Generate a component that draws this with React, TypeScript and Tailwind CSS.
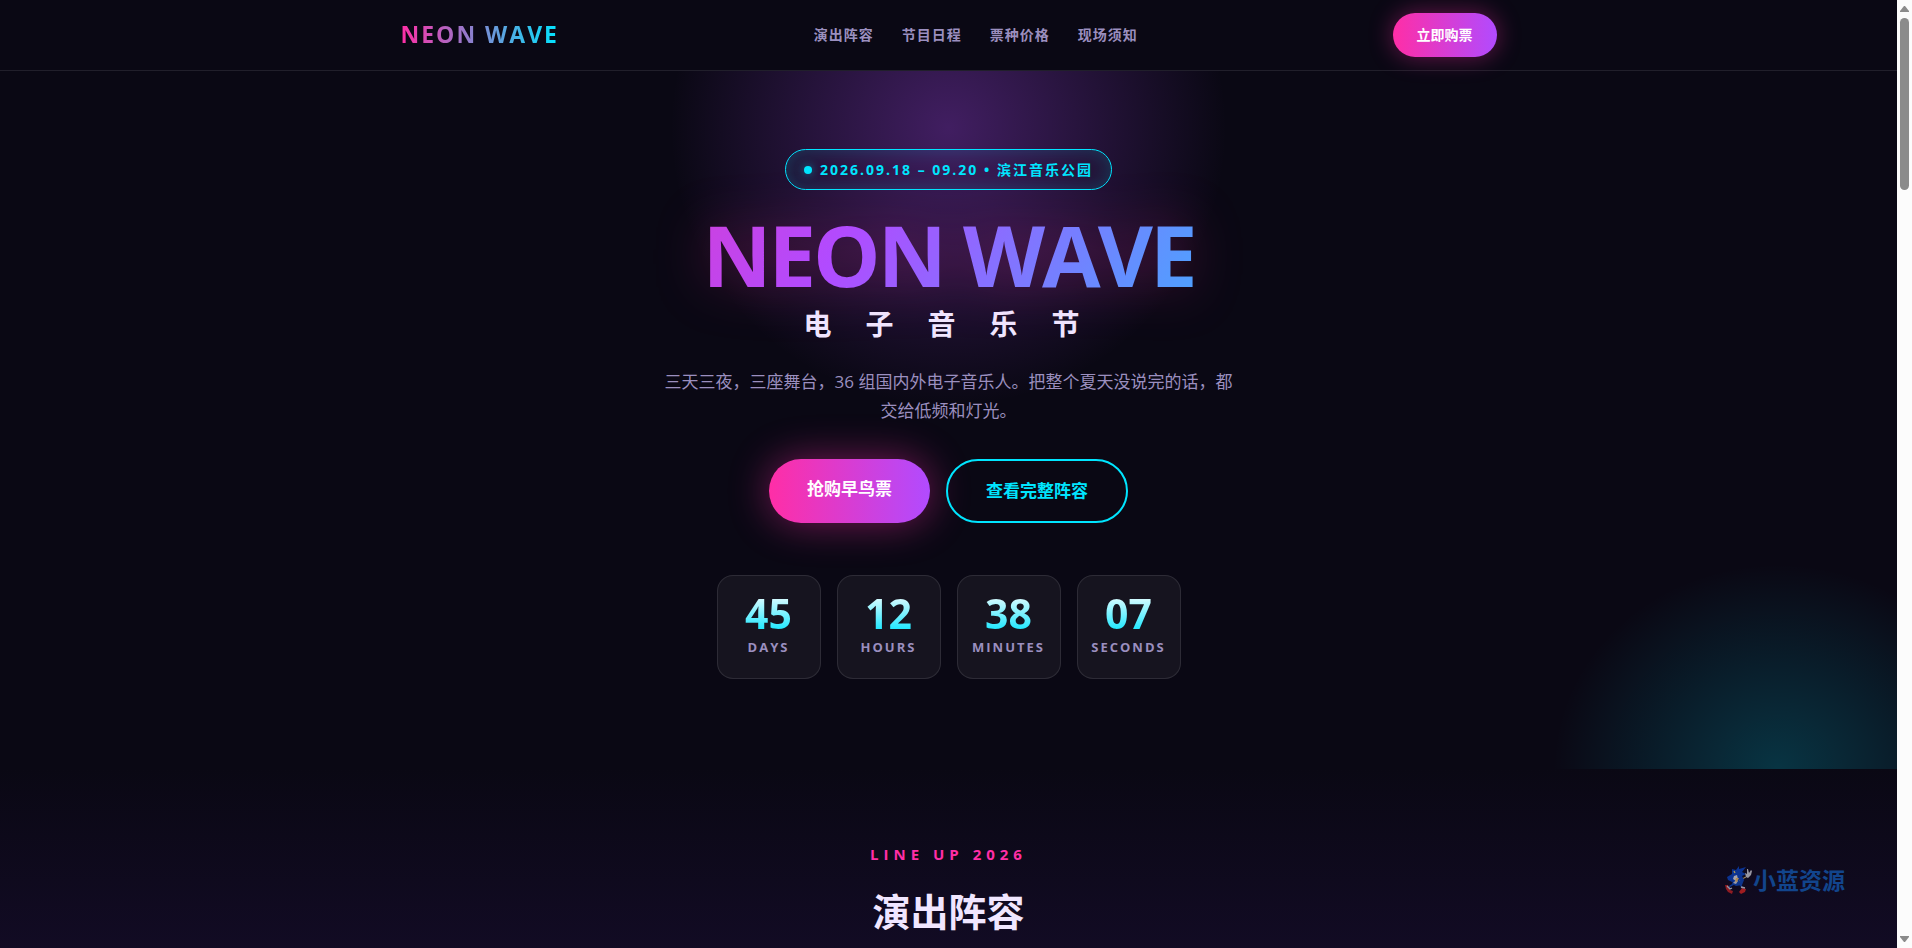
const navLinks = [
  { label: "演出阵容", href: "#lineup" },
  { label: "节目日程", href: "#schedule" },
  { label: "票种价格", href: "#tickets" },
  { label: "现场须知", href: "#info" },
];

const countdown = [
  { value: "45", unit: "DAYS" },
  { value: "12", unit: "HOURS" },
  { value: "38", unit: "MINUTES" },
  { value: "07", unit: "SECONDS" },
];

function Header() {
  return (
    <header className="relative z-10 border-b border-[#211f2b] bg-[#0a0814]">
      <div className="mx-auto flex h-[70px] max-w-[1144px] items-center justify-between px-6">
        <a
          href="#top"
          className="bg-[linear-gradient(90deg,#ff2ea6,#00e5ff)] bg-clip-text pb-0.5 text-[23px] leading-[34px] font-bold tracking-[2px] text-transparent"
        >
          NEON WAVE
        </a>
        <nav className="flex gap-7">
          {navLinks.map((link) => (
            <a key={link.href} href={link.href} className="text-sm font-bold tracking-[1px] text-[#9b8fbf]">
              {link.label}
            </a>
          ))}
        </nav>
        <a
          href="#tickets"
          className="rounded-full bg-[linear-gradient(90deg,#ff2ea6,#b14bff)] px-6 py-[11px] text-sm leading-[22px] font-bold text-white shadow-[0_0_24px_rgba(255,46,166,0.4)]"
        >
          立即购票
        </a>
      </div>
    </header>
  );
}

function Hero() {
  return (
    <section
      id="top"
      className="flex flex-col items-center bg-[radial-gradient(225px_205px_at_calc(100%_-_119px)_100%,rgba(0,229,255,0.2),rgba(0,229,255,0)),radial-gradient(circle_278px_at_50%_57px,rgba(177,75,255,0.33),rgba(177,75,255,0))] px-6 pt-[78px] pb-[90px] text-center"
    >
      <div className="flex items-center gap-2 rounded-full border border-[#00e5ff] px-[18px] py-[9px] text-sm leading-[21px] font-bold tracking-[2px] text-[#00e5ff] shadow-[inset_0_0_20px_rgba(0,229,255,0.2)]">
        <span className="size-2 rounded-full bg-[#00e5ff] shadow-[0_0_10px_rgba(0,229,255,0.6)]" />
        2026.09.18 – 09.20 • 滨江音乐公园
      </div>

      <h1 className="mt-5 w-full max-w-[1096px] bg-[linear-gradient(120deg,#ff2ea6,#b14bff_40%,#00e5ff)] bg-clip-text text-[85px] leading-[88px] font-bold tracking-[-3px] text-transparent drop-shadow-[0_0_26px_rgba(255,46,166,0.28)]">
        NEON WAVE
      </h1>
      <p className="mt-1.5 pl-5 text-[28px] leading-[40px] font-bold tracking-[34px] text-[#f0e6ff]">电子音乐节</p>

      <p className="mt-[23px] max-w-[580px] text-[17px] leading-[29px] text-[#9b8fbf]">
        三天三夜，三座舞台，36 组国内外电子音乐人。把整个夏天没说完的话，都交给低频和灯光。
      </p>

      <div className="mt-[34px] flex gap-4">
        <a
          href="#tickets"
          className="rounded-full bg-[linear-gradient(90deg,#ff2ea6,#b14bff)] px-[38px] py-4 text-[17px] leading-[28px] font-bold text-white shadow-[0_0_40px_rgba(255,46,166,0.45)]"
        >
          抢购早鸟票
        </a>
        <a
          href="#lineup"
          className="rounded-full border-2 border-[#00e5ff] px-[38px] py-4 text-[17px] leading-[28px] font-bold text-[#00e5ff]"
        >
          查看完整阵容
        </a>
      </div>

      <div className="mt-[52px] flex gap-4">
        {countdown.map((item) => (
          <div
            key={item.unit}
            className="flex size-[104px] flex-col items-center rounded-2xl border border-white/10 bg-white/5 pt-[15px]"
          >
            <span className="bg-[linear-gradient(180deg,#ffffff,#00e5ff)] bg-clip-text text-[41px] leading-[44px] font-bold text-transparent">
              {item.value}
            </span>
            <span className="mt-0.5 text-[13px] leading-[20px] font-bold tracking-[2px] text-[#9b8fbf]">
              {item.unit}
            </span>
          </div>
        ))}
      </div>
    </section>
  );
}

function Lineup() {
  return (
    <section
      id="lineup"
      className="flex flex-col items-center bg-[linear-gradient(180deg,#0a0814,#120b24_180px)] px-6 pt-[74px] pb-20 text-center"
    >
      <p className="text-[15px] leading-[22px] font-bold tracking-[5px] text-[#ff2ea6]">LINE UP 2026</p>
      <h2 className="mt-[18px] text-[38px] leading-[57px] font-bold text-[#f0e6ff]">演出阵容</h2>
    </section>
  );
}

function Mascot() {
  return (
    <svg viewBox="0 0 28 28" className="size-7" aria-hidden="true">
      {/* legs and shoes */}
      <path d="M9 18 5 20 4 23M15 18l3 5" stroke="#0c348b" strokeWidth="1.5" fill="none" />
      <path d="M0 19l3 0 2 5 3 1-1 3-4-2-2-3z" fill="#8f1b22" />
      <path d="M14 26l3-4 4 1-1 3-4 2z" fill="#a01d20" />
      <path d="M2 20l3 3 2-1M16 21l4 1" stroke="#9a98a2" strokeWidth="1.3" fill="none" />
      {/* body */}
      <path d="M9 12l10 2-2 5-6 1-4-2z" fill="#0c348b" />
      <path d="M8 17l3-3 2 1-2 3z" fill="#9b99a2" />
      <path d="M14 14l5-2 2-1" stroke="#a2875c" strokeWidth="1.2" fill="none" />
      {/* head with quills */}
      <path d="M2 11l5-3 0-5 4 1 3-4 0 3 7-2-4 5 4 2-4 2 2 4-6 0-6 2-4-2z" fill="#0b3391" />
      <path d="M9 10l3-1 1 4-2 2-3-2z" fill="#a7a4ae" />
      <path d="M11 12l3 0-2 4-2-1z" fill="#b18b52" />
      <path d="M9 5l1 2" stroke="#b39b55" strokeWidth="1.3" />
      {/* raised hand */}
      <path d="M21 11l-1-4 2 1 0-5 1 0 1 4 2-3 1 1-1 4-3 3z" fill="#9896a1" />
    </svg>
  );
}

function Watermark() {
  return (
    <div className="pointer-events-none absolute right-[52px] bottom-[51px] flex items-center text-[23px] leading-[34px] font-bold text-[#12458c]">
      <Mascot />
      小蓝资源
    </div>
  );
}

function Scrollbar() {
  return (
    <div className="flex w-[15px] shrink-0 flex-col items-center bg-[#fcfcfc] py-[6px]" aria-hidden="true">
      <svg viewBox="0 0 9 6" className="h-[6px] w-[9px]">
        <path d="M0 6V5L4 0H5L9 5V6z" fill="#8b8b8b" />
      </svg>
      <div className="mt-[6px] h-[172px] w-[9px] rounded-full bg-[#8b8b8b]" />
      <svg viewBox="0 0 9 6" className="mt-auto h-[6px] w-[9px]">
        <path d="M0 0H9V1L5 6H4L0 1z" fill="#8b8b8b" />
      </svg>
    </div>
  );
}

export default function App() {
  return (
    <div className="flex h-screen bg-[#0a0814] font-['Open_Sans','Noto_Sans_CJK_SC',sans-serif]">
      <div className="relative min-w-0 flex-1 overflow-hidden">
        <Header />
        <main>
          <Hero />
          <Lineup />
        </main>
        <Watermark />
      </div>
      <Scrollbar />
    </div>
  );
}
